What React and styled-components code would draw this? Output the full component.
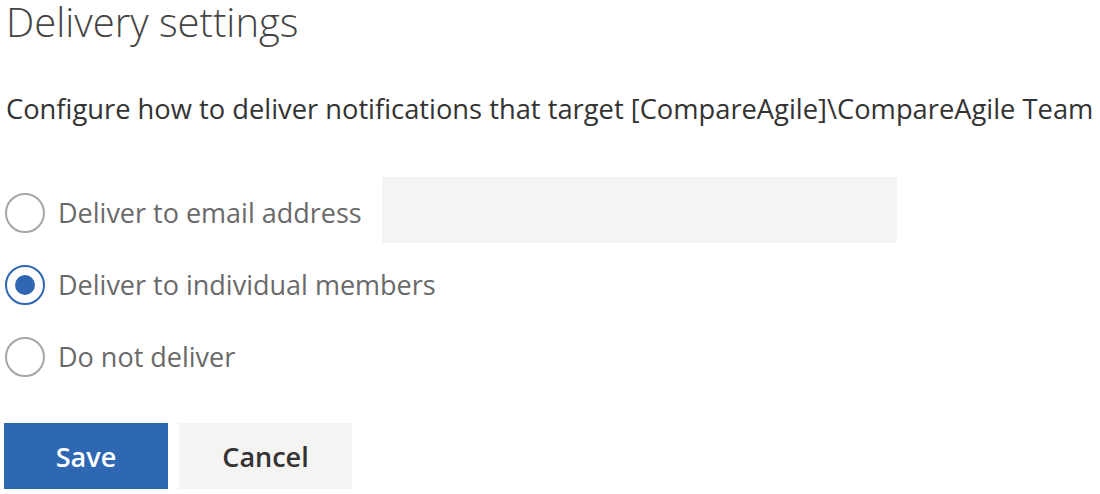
import React, { useState } from "react";
import styled, { createGlobalStyle } from "styled-components";

const GlobalStyle = createGlobalStyle`
  html, body {
    margin: 0;
    padding: 0;
    background: #ffffff;
  }
  body {
    font-family: "Open Sans", "Noto Sans", sans-serif;
  }
`;

const options = [
  { id: "email", label: "Deliver to email address", withInput: true },
  { id: "members", label: "Deliver to individual members" },
  { id: "none", label: "Do not deliver" },
];

export default function App() {
  const [selected, setSelected] = useState("members");

  return (
    <>
      <GlobalStyle />
      <Page>
        <Title>Delivery settings</Title>
        <Description>
          Configure how to deliver notifications that target
          [CompareAgile]\CompareAgile Team
        </Description>
        <OptionList>
          {options.map((opt) => (
            <OptionRow key={opt.id} onClick={() => setSelected(opt.id)}>
              <Radio $checked={selected === opt.id} />
              <OptionLabel>{opt.label}</OptionLabel>
              {opt.withInput && <EmailInput type="text" />}
            </OptionRow>
          ))}
        </OptionList>
        <ButtonBar>
          <PrimaryButton>Save</PrimaryButton>
          <SecondaryButton>Cancel</SecondaryButton>
        </ButtonBar>
      </Page>
    </>
  );
}

const Page = styled.div`
  display: flex;
  flex-direction: column;
  padding: 0 0 0 5px;
  width: 1100px;
  height: 494px;
  box-sizing: border-box;
`;

const Title = styled.h1`
  margin: 0;
  padding-left: 1px;
  font-size: 40px;
  font-weight: 300;
  line-height: 43px;
  color: #444444;
  white-space: nowrap;
`;

const Description = styled.div`
  margin-top: 48px;
  padding-left: 1px;
  font-size: 27.3px;
  line-height: 36px;
  color: #333333;
  white-space: nowrap;
`;

const OptionList = styled.div`
  display: flex;
  flex-direction: column;
  margin-top: 50px;
`;

const OptionRow = styled.label`
  display: flex;
  align-items: center;
  height: 72px;
  cursor: pointer;
`;

const Radio = styled.span`
  position: relative;
  flex: none;
  width: 40px;
  height: 40px;
  box-sizing: border-box;
  border-radius: 50%;
  border: 2px solid ${(p) => (p.$checked ? "#2f67b2" : "#a6a6a6")};
  margin-right: 13px;

  &::after {
    content: "";
    display: ${(p) => (p.$checked ? "block" : "none")};
    position: absolute;
    top: 8px;
    left: 8px;
    width: 20px;
    height: 20px;
    border-radius: 50%;
    background: #2f67b2;
  }
`;

const OptionLabel = styled.span`
  font-size: 27px;
  line-height: 36px;
  color: #6a6a6a;
  white-space: nowrap;
`;

const EmailInput = styled.input`
  align-self: flex-start;
  margin-left: 20px;
  width: 515px;
  height: 66px;
  box-sizing: border-box;
  border: none;
  outline: none;
  background: #f4f4f4;
`;

const ButtonBar = styled.div`
  display: flex;
  gap: 11px;
  margin-top: 30px;
  margin-left: -1px;
`;

const BaseButton = styled.button`
  height: 66px;
  padding: 0;
  border: none;
  font-family: "Open Sans", "Noto Sans", sans-serif;
  font-size: 27px;
  font-weight: 600;
  cursor: pointer;
`;

const PrimaryButton = styled(BaseButton)`
  width: 164px;
  background: #2e67b2;
  color: #ffffff;
`;

const SecondaryButton = styled(BaseButton)`
  width: 173px;
  background: #f4f4f3;
  color: #333333;
`;
